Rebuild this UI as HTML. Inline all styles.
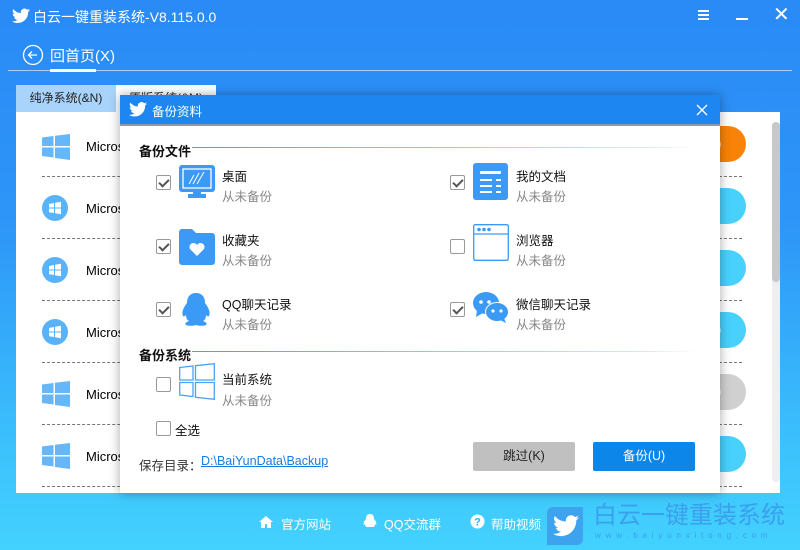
<!DOCTYPE html>
<html><head><meta charset="utf-8"><style>
*{margin:0;padding:0;box-sizing:border-box}
body{width:800px;height:550px;overflow:hidden;position:relative;font-family:"Liberation Sans","Noto Sans CJK SC",sans-serif;background:linear-gradient(180deg,#2a8af6 0%,#2d95f8 40%,#3bc0fc 80%,#43d2fe 100%)}
.abs{position:absolute}
.t{color:#fff}
.panel{left:16px;top:112px;width:764px;height:381px;background:#fff}
.dash{position:absolute;left:42px;width:700px;border-top:1px dashed #777}
.pill{position:absolute;left:706px;width:40px;height:36px;border-radius:0 18px 18px 0;color:#fff;font-size:11px;line-height:36px}
.dlg{left:120px;top:95px;width:600px;height:398px;background:#fff;box-shadow:0 0 10px rgba(0,0,0,.35)}
.hdr{left:0;top:0;width:600px;height:31px;background:#1e86f1;border-bottom:2px solid #8a9aa8}
.sec{font-size:13px;font-weight:bold;color:#111}
.cb{position:absolute;width:15px;height:15px;border:1px solid #999;border-radius:2px;background:#fff}
.cb.c::after{content:"";position:absolute;left:4px;top:1px;width:4px;height:8px;border:solid #555;border-width:0 2px 2px 0;transform:rotate(45deg)}
.n{position:absolute;font-size:12.5px;color:#111}
.s{position:absolute;font-size:12.5px;color:#888}
</style></head><body>
<svg class="abs" style="left:12px;top:8px" width="18" height="16" viewBox="0 0 24 20"><path fill="#fff" d="M24 2.4a9.8 9.8 0 0 1-2.8.8 4.9 4.9 0 0 0 2.2-2.7 9.9 9.9 0 0 1-3.1 1.2A4.9 4.9 0 0 0 11.9 6 14 14 0 0 1 1.7.8a4.9 4.9 0 0 0 1.5 6.6A4.9 4.9 0 0 1 1 6.8a4.9 4.9 0 0 0 3.9 4.8 4.9 4.9 0 0 1-2.2.1 4.9 4.9 0 0 0 4.6 3.4A9.9 9.9 0 0 1 0 17.1 14 14 0 0 0 7.5 19.3c9 0 14-7.5 14-14v-.6A10 10 0 0 0 24 2.4z"/></svg>
<div class="abs t" style="left:33px;top:7px;font-size:14px">白云一键重装系统-V8.115.0.0</div>
<div class="abs" style="left:698px;top:10px;width:11px;height:2px;background:#fff;box-shadow:0 4px 0 #fff,0 8px 0 #fff"></div>
<div class="abs" style="left:736px;top:18px;width:12px;height:2px;background:#fff"></div>
<div class="abs t" style="left:773px;top:2px;font-size:20px">✕</div>
<svg class="abs" style="left:22px;top:44px" width="22" height="22"><circle cx="11" cy="11" r="9.5" fill="none" stroke="#fff" stroke-width="1.3"/><path d="M15 11H7M10 7.5 6.5 11 10 14.5" fill="none" stroke="#fff" stroke-width="1.3"/></svg>
<div class="abs t" style="left:50px;top:45px;font-size:15px">回首页(X)</div>
<div class="abs" style="left:8px;top:70px;width:784px;height:1px;background:#a9cff6"></div>
<div class="abs" style="left:50px;top:69px;width:46px;height:3px;background:#fff"></div>
<div class="abs" style="left:16px;top:85px;width:100px;height:27px;background:#a8d3fb;font-size:12px;color:#222;text-align:center;line-height:27px">纯净系统(&amp;N)</div>
<div class="abs" style="left:116px;top:85px;width:100px;height:27px;background:#fff;font-size:12px;color:#222;text-align:center;line-height:27px">原版系统(&amp;M)</div>
<div class="abs panel"></div>
<div class="abs" style="left:0;top:0;width:800px;height:550px">
<svg class="abs" style="left:42px;top:134px" width="28" height="26" viewBox="0 0 28 26"><path fill="#66b6f8" d="M0 3.5 11.5 2v10H0zM13 1.8 28 0v12H13zM0 13.5h11.5v10L0 22zM13 13.5h15V26L13 24z"/></svg>
<div class="abs" style="left:86px;top:139px;font-size:13px">Micros</div>
<div class="dash" style="top:176px"></div>
<svg class="abs" style="left:42px;top:195px" width="26" height="26"><circle cx="13" cy="13" r="13" fill="#5ab3f9"/><path fill="#fff" d="M7 9l5-1v4.5H7zM13 7.8l6-1v5.7h-6zM7 13.5h5V18l-5-.8zM13 13.5h6v5.7l-6-1z"/></svg>
<div class="abs" style="left:86px;top:201px;font-size:13px">Micros</div>
<div class="dash" style="top:238px"></div>
<svg class="abs" style="left:42px;top:257px" width="26" height="26"><circle cx="13" cy="13" r="13" fill="#5ab3f9"/><path fill="#fff" d="M7 9l5-1v4.5H7zM13 7.8l6-1v5.7h-6zM7 13.5h5V18l-5-.8zM13 13.5h6v5.7l-6-1z"/></svg>
<div class="abs" style="left:86px;top:263px;font-size:13px">Micros</div>
<div class="dash" style="top:300px"></div>
<svg class="abs" style="left:42px;top:319px" width="26" height="26"><circle cx="13" cy="13" r="13" fill="#5ab3f9"/><path fill="#fff" d="M7 9l5-1v4.5H7zM13 7.8l6-1v5.7h-6zM7 13.5h5V18l-5-.8zM13 13.5h6v5.7l-6-1z"/></svg>
<div class="abs" style="left:86px;top:325px;font-size:13px">Micros</div>
<div class="dash" style="top:362px"></div>
<svg class="abs" style="left:42px;top:381px" width="28" height="26" viewBox="0 0 28 26"><path fill="#66b6f8" d="M0 3.5 11.5 2v10H0zM13 1.8 28 0v12H13zM0 13.5h11.5v10L0 22zM13 13.5h15V26L13 24z"/></svg>
<div class="abs" style="left:86px;top:387px;font-size:13px">Micros</div>
<div class="dash" style="top:424px"></div>
<svg class="abs" style="left:42px;top:443px" width="28" height="26" viewBox="0 0 28 26"><path fill="#66b6f8" d="M0 3.5 11.5 2v10H0zM13 1.8 28 0v12H13zM0 13.5h11.5v10L0 22zM13 13.5h15V26L13 24z"/></svg>
<div class="abs" style="left:86px;top:449px;font-size:13px">Micros</div>
<div class="dash" style="top:486px"></div>
<div class="pill" style="top:126px;background:#f88308">(H)</div>
<div class="pill" style="top:188px;background:#48d1fc">(A)</div>
<div class="pill" style="top:250px;background:#48d1fc">(B)</div>
<div class="pill" style="top:312px;background:#48d1fc">(C)</div>
<div class="pill" style="top:374px;background:#d0d0d0">(D)</div>
<div class="pill" style="top:436px;background:#48d1fc">(E)</div>
<div class="abs" style="left:772px;top:122px;width:8px;height:360px;background:#eee;border-radius:4px"></div>
<div class="abs" style="left:772px;top:122px;width:8px;height:160px;background:#c8c8c8;border-radius:4px"></div>
</div>
<div class="abs dlg">
 <div class="abs hdr"></div>
 <svg class="abs" style="left:9px;top:7px" width="18" height="15" viewBox="0 0 24 20"><path fill="#fff" d="M24 2.4a9.8 9.8 0 0 1-2.8.8 4.9 4.9 0 0 0 2.2-2.7 9.9 9.9 0 0 1-3.1 1.2A4.9 4.9 0 0 0 11.9 6 14 14 0 0 1 1.7.8a4.9 4.9 0 0 0 1.5 6.6A4.9 4.9 0 0 1 1 6.8a4.9 4.9 0 0 0 3.9 4.8 4.9 4.9 0 0 1-2.2.1 4.9 4.9 0 0 0 4.6 3.4A9.9 9.9 0 0 1 0 17.1 14 14 0 0 0 7.5 19.3c9 0 14-7.5 14-14v-.6A10 10 0 0 0 24 2.4z"/></svg>
 <div class="abs t" style="left:32px;top:6px;font-size:12.5px">备份资料</div>
 <svg class="abs" style="left:576px;top:9px" width="12" height="12"><path d="M1 1l10 10M11 1 1 11" stroke="#fff" stroke-width="1.3"/></svg>
 <div class="abs sec" style="left:19px;top:46px">备份文件</div>
 <div class="abs" style="left:72px;top:52px;width:505px;height:1px;background:linear-gradient(90deg,#5a9ccc,#d6eaf5 90%,#fff)"></div>
 <div class="cb c" style="left:36px;top:80px"></div>
 <svg class="abs" style="left:59px;top:70px" width="36" height="33"><rect x="0" y="0" width="36" height="27" rx="3" fill="#3b9af6"/><rect x="4" y="4" width="28" height="19" fill="none" stroke="#fff" stroke-width="1.3"/><path d="M10 19l5-9M14 19l6-11M18 19l7-12" stroke="#fff" stroke-width="1"/><rect x="14" y="26" width="8" height="3" fill="#3b9af6"/><rect x="9" y="29" width="18" height="4" fill="#3b9af6"/></svg>
 <div class="n" style="left:102px;top:71px">桌面</div><div class="s" style="left:102px;top:91px">从未备份</div>
 <div class="cb c" style="left:36px;top:144px"></div>
 <svg class="abs" style="left:59px;top:134px" width="36" height="36"><path d="M0 3a3 3 0 0 1 3-3h10l4 4h16a3 3 0 0 1 3 3v26a3 3 0 0 1-3 3H3a3 3 0 0 1-3-3z" fill="#3b9af6"/><path d="M18 27l-7-7a4 4 0 0 1 7-4 4 4 0 0 1 7 4z" fill="#fff"/></svg>
 <div class="n" style="left:102px;top:135px">收藏夹</div><div class="s" style="left:102px;top:155px">从未备份</div>
 <div class="cb c" style="left:36px;top:207px"></div>
 <svg class="abs" style="left:60px;top:197px" width="33" height="36"><path fill="#3b9af6" d="M16 1c6 0 9 4 9 10 3 4 6 9 4 13-1 1-2 0-3-1 0 3-1 5-3 6 2 1 5 2 3 4-2 1-7 1-10 0-3 1-8 1-10 0-2-2 1-3 3-4-2-1-3-3-3-6-1 1-2 2-3 1-2-4 1-9 4-13C7 5 10 1 16 1z"/></svg>
 <div class="n" style="left:102px;top:199px">QQ聊天记录</div><div class="s" style="left:102px;top:219px">从未备份</div>
 <div class="cb c" style="left:330px;top:80px"></div>
 <svg class="abs" style="left:353px;top:68px" width="35" height="37"><rect width="35" height="37" rx="3" fill="#3b9af6"/><rect x="7" y="8" width="21" height="3" rx="1" fill="#fff"/><rect x="7" y="16" width="12" height="2" fill="#fff"/><rect x="23" y="16" width="5" height="2" fill="#fff"/><rect x="7" y="22" width="12" height="2" fill="#fff"/><rect x="23" y="22" width="5" height="2" fill="#fff"/><rect x="7" y="28" width="12" height="2" fill="#fff"/><rect x="23" y="28" width="5" height="2" fill="#fff"/></svg>
 <div class="n" style="left:396px;top:71px">我的文档</div><div class="s" style="left:396px;top:91px">从未备份</div>
 <div class="cb" style="left:330px;top:144px"></div>
 <svg class="abs" style="left:353px;top:129px" width="36" height="37"><rect x=".7" y=".7" width="34.6" height="35.6" rx="1.5" fill="#fff" stroke="#3b9af6" stroke-width="1.3"/><path d="M1 10h34" stroke="#3b9af6" stroke-width="1.3"/><circle cx="6" cy="5.5" r="1.8" fill="#3b9af6"/><circle cx="11" cy="5.5" r="1.8" fill="#3b9af6"/><circle cx="16" cy="5.5" r="1.8" fill="#3b9af6"/></svg>
 <div class="n" style="left:396px;top:135px">浏览器</div><div class="s" style="left:396px;top:155px">从未备份</div>
 <div class="cb c" style="left:330px;top:207px"></div>
 <svg class="abs" style="left:353px;top:196px" width="36" height="33"><ellipse cx="13" cy="12" rx="13" ry="11" fill="#3b9af6"/><path d="M4 19l-1 7 7-4z" fill="#3b9af6"/><ellipse cx="24" cy="21" rx="12" ry="10" fill="#fff"/><ellipse cx="24" cy="21" rx="11" ry="9" fill="#3b9af6"/><path d="M31 27l2 5-6-3z" fill="#3b9af6"/><circle cx="8" cy="11" r="1.8" fill="#fff"/><circle cx="16" cy="11" r="1.8" fill="#fff"/><circle cx="20" cy="20" r="1.6" fill="#fff"/><circle cx="28" cy="20" r="1.6" fill="#fff"/></svg>
 <div class="n" style="left:396px;top:199px">微信聊天记录</div><div class="s" style="left:396px;top:219px">从未备份</div>
 <div class="abs sec" style="left:19px;top:250px">备份系统</div>
 <div class="abs" style="left:72px;top:256px;width:505px;height:1px;background:linear-gradient(90deg,#5a9ccc,#d6eaf5 90%,#fff)"></div>
 <div class="cb" style="left:36px;top:282px"></div>
 <svg class="abs" style="left:59px;top:268px" width="36" height="37"><path d="M.7 4.5 14 3v14H.7zM16.5 2.7 35.3.7V17H16.5zM.7 19.5H14v14L.7 32zM16.5 19.5h18.8v16.8l-18.8-2z" fill="none" stroke="#4aa3f7" stroke-width="1.3"/></svg>
 <div class="n" style="left:102px;top:274px">当前系统</div><div class="s" style="left:102px;top:295px">从未备份</div>
 <div class="cb" style="left:36px;top:326px"></div>
 <div class="n" style="left:55px;top:325px">全选</div>
 <div class="n" style="left:19px;top:360px;color:#333">保存目录：</div>
 <div class="n" style="left:81px;top:359px;color:#1a7be0;text-decoration:underline">D:\BaiYunData\Backup</div>
 <div class="abs" style="left:353px;top:347px;width:102px;height:29px;background:#c0c0c0;border-radius:2px;text-align:center;line-height:29px;font-size:12.5px;color:#222">跳过(K)</div>
 <div class="abs" style="left:473px;top:347px;width:102px;height:29px;background:#0d86ea;border-radius:2px;text-align:center;line-height:29px;font-size:12.5px;color:#fff">备份(U)</div>
</div>
<svg class="abs" style="left:259px;top:515px" width="14" height="14"><path d="M7 1 0 7h2v6h4V9h2v4h4V7h2z" fill="#fff"/></svg>
<div class="abs t" style="left:281px;top:514px;font-size:12.5px">官方网站</div>
<svg class="abs" style="left:363px;top:514px" width="14" height="15"><path fill="#fff" d="M7 0c3 0 4 2 4 5 2 2 3 5 2 6l-1-1c0 2-1 3-2 3h-6c-1 0-2-1-2-3l-1 1c-1-1 0-4 2-6 0-3 1-5 4-5z"/></svg>
<div class="abs t" style="left:384px;top:514px;font-size:12.5px">QQ交流群</div>
<svg class="abs" style="left:470px;top:514px" width="15" height="15"><circle cx="7.5" cy="7.5" r="7" fill="#fff"/><text x="7.5" y="11.5" text-anchor="middle" font-size="11" font-weight="bold" fill="#2ab0f5" font-family="Liberation Sans">?</text></svg>
<div class="abs t" style="left:491px;top:514px;font-size:12.5px">帮助视频</div>
<div class="abs" style="left:547px;top:507px;width:36px;height:38px;background:#3ea3ef;border-radius:6px 0 6px 0"></div>
<svg class="abs" style="left:553px;top:515px" width="26" height="22" viewBox="0 0 24 20"><path fill="#fff" d="M24 2.4a9.8 9.8 0 0 1-2.8.8 4.9 4.9 0 0 0 2.2-2.7 9.9 9.9 0 0 1-3.1 1.2A4.9 4.9 0 0 0 11.9 6 14 14 0 0 1 1.7.8a4.9 4.9 0 0 0 1.5 6.6A4.9 4.9 0 0 1 1 6.8a4.9 4.9 0 0 0 3.9 4.8 4.9 4.9 0 0 1-2.2.1 4.9 4.9 0 0 0 4.6 3.4A9.9 9.9 0 0 1 0 17.1 14 14 0 0 0 7.5 19.3c9 0 14-7.5 14-14v-.6A10 10 0 0 0 24 2.4z"/></svg>
<div class="abs" style="left:593px;top:503px;font-size:24px;line-height:26px;color:#3aa0ee;white-space:nowrap">白云一键重装系统</div>
<div class="abs" style="left:595px;top:531px;font-size:8px;line-height:10px;color:#3aa0ee;letter-spacing:4.8px;white-space:nowrap">www.baiyunxitong.com</div>
</body></html>
